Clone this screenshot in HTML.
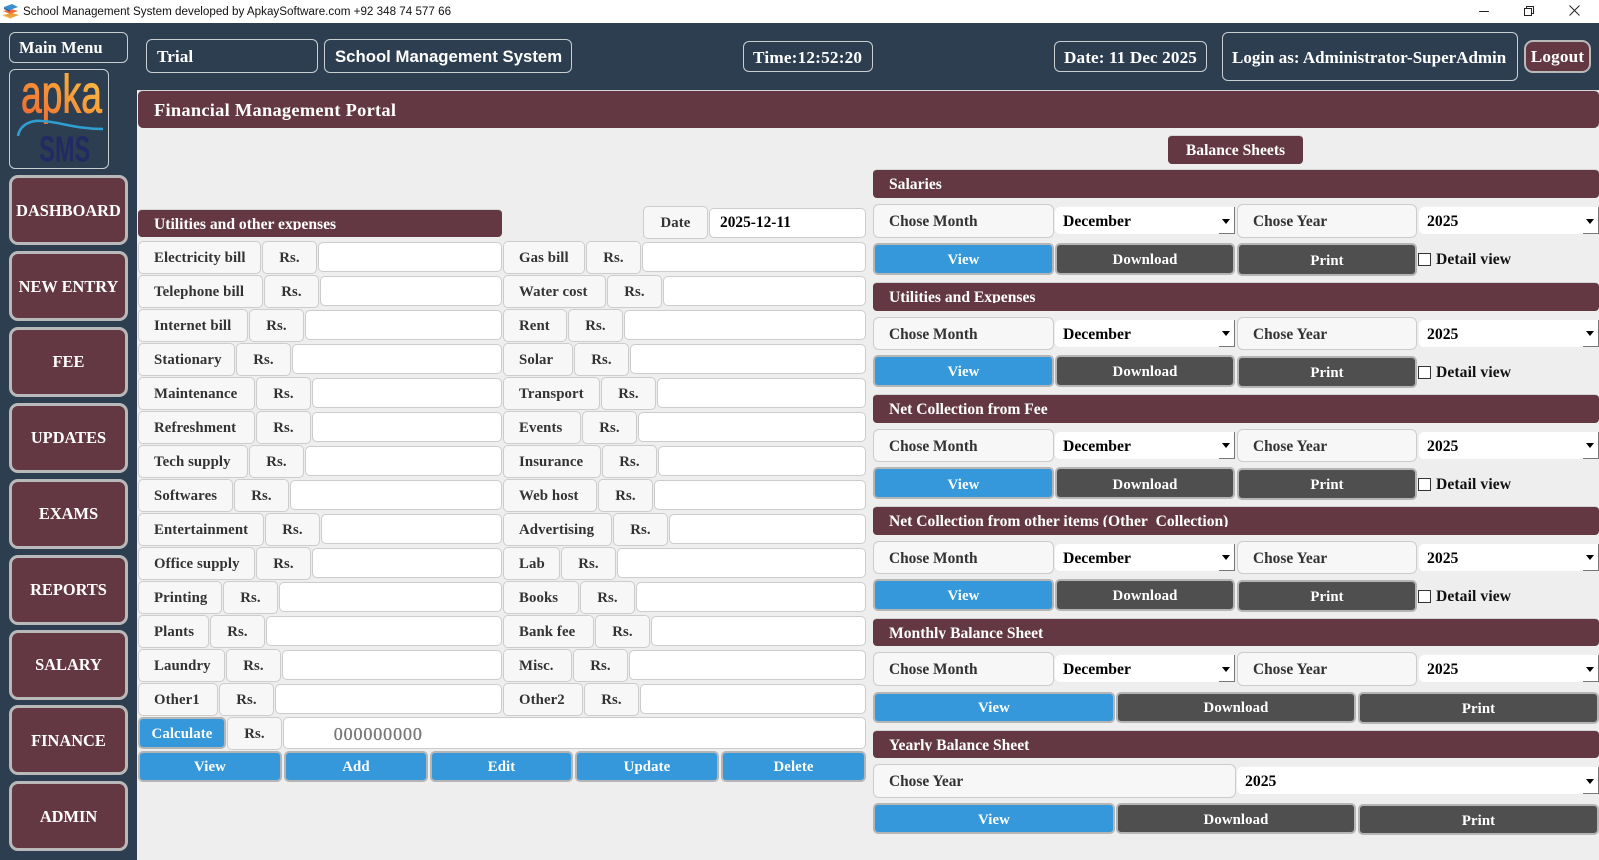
<!DOCTYPE html>
<html lang="en"><head><meta charset="utf-8"><title>School Management System</title>
<style>
*{box-sizing:border-box;margin:0;padding:0}
html,body{width:1599px;height:860px;overflow:hidden;background:#eee;font-family:"Liberation Serif",serif;font-weight:bold}
.a{position:absolute}
#tb{left:0;top:0;width:1599px;height:23px;background:#fff;font:11.65px/24px "Liberation Sans",sans-serif;color:#111}
#side{left:0;top:23px;width:137px;height:837px;background:#2c3e50}
#top{left:137px;top:23px;width:1462px;height:67px;background:#2c3e50}
#main{left:137px;top:90px;width:1462px;height:770px;background:#eee;border-top:1px solid #ddd}
.o{position:absolute;border:1px solid #c9ced3;border-radius:6px;color:#fff;display:flex;align-items:center;font-size:17.2px;letter-spacing:.15px;white-space:nowrap;padding-top:2px}
.n{position:absolute;left:9px;width:119px;height:70px;background:#643842;border:3px solid #b9b9b9;border-radius:9px;color:#fff;display:flex;align-items:center;justify-content:center;font-size:16.4px}
.h{position:absolute;background:#643842;border-top:1px solid #d5d5d5;border-radius:4px;color:#fff;padding-left:16px;font-size:15.6px}
.h span{display:block;height:20px;line-height:29px;overflow:hidden;white-space:pre}
.r{position:absolute;height:33px;display:flex}
.l{height:33px;background:#f7f7f7;border:1px solid #ccc;border-radius:5px;color:#333;padding-left:15px;line-height:33px;font-size:14.8px;white-space:nowrap;margin-right:1px;flex:none;letter-spacing:.1px}
.s{width:55px;padding:0;text-align:center}
.i{height:30px;margin-top:1px;background:#fff;border:1px solid #ccc;border-radius:5px;flex:1}
.b{position:absolute;border:2px solid #b5b5b5;border-radius:5px;color:#fff;display:flex;align-items:center;justify-content:center;font-size:14.8px;letter-spacing:.1px;background:#3498db;padding-top:2px}
.g .b{padding-top:3.5px}
.d{background:#4f4f4f}
.lb{position:absolute;height:33.4px;background:#f7f7f7;border:1px solid #ccc;border-radius:6px;color:#333;padding-left:15px;line-height:34px;font-size:15.4px}
.se{position:absolute;height:27px;background:#fff;border-radius:5px 0 0 5px;color:#000;padding-left:8px;line-height:29px;font-size:15.7px}
.se i{position:absolute;right:0;top:0;width:16px;height:27px;border-right:1.5px solid #777;border-bottom:1.5px solid #777;border-radius:0}
.se i:before{content:"";position:absolute;left:3px;top:11.5px;border-left:4px solid transparent;border-right:4px solid transparent;border-top:5px solid #000}
.g{position:absolute;left:0;top:0}
.c{position:absolute;left:1418px;width:13px;height:13px;background:#fff;border:1.5px solid #333}
.dv{position:absolute;left:1436px;color:#111;font-size:15.6px;line-height:18px;letter-spacing:.1px;white-space:nowrap}
</style></head><body>

<div id="tb" class="a">
<svg class="a" style="left:2px;top:2px" width="18" height="18" viewBox="0 0 18 18"><path d="M1 13l9-2 7 2-8 3z" fill="#e9a23b"/><path d="M1 9l8-2 7 2-8 3z" fill="#f26a3c"/><path d="M2 5l8-3 6 3-8 3z" fill="#3a8fd0"/><path d="M2 5l6 3v2L2 7z" fill="#2c6aa5"/><path d="M1 13l8 3v1l-8-3z" fill="#f6c864"/></svg>
<span class="a" style="left:23px;top:0;white-space:nowrap">School Management System developed by ApkaySoftware.com +92 348 74 577 66</span>
<svg class="a" style="left:1475px;top:3px" width="120" height="16" viewBox="0 0 120 16" fill="none" stroke="#222" stroke-width="1"><path d="M4 8.5h10"/><path d="M49.500 5.500h7v7h-7zM51.500 5.500v-2h7v7h-2"/><path d="M94.500 2.500l10 10M104.500 2.500l-10 10"/></svg>
</div>

<div id="side" class="a"></div>
<div id="top" class="a"></div>
<div id="main" class="a"></div>

<div class="o" style="left:9px;top:32px;width:119px;height:31px;padding:0 0 0 9px;font-size:16.4px">Main Menu</div>
<div class="o" style="left:9px;top:69px;width:100px;height:100px;padding:0">
<svg width="98" height="98" viewBox="0 0 98 98" style="display:block"><defs><linearGradient id="og" x1="0" y1="1" x2="1" y2="0"><stop offset="0" stop-color="#ee5f2e"/><stop offset=".6" stop-color="#f7a23b"/><stop offset="1" stop-color="#f9c64a"/></linearGradient></defs>
<text x="11" y="42.700" font-family="Liberation Sans,sans-serif" font-size="54" font-weight="normal" fill="url(#og)" textLength="81" lengthAdjust="spacingAndGlyphs" stroke="url(#og)" stroke-width="1">apka</text>
<path d="M8 66C10 54 22 50 32 51C50 52 66 59 93 59" fill="none" stroke="#2f9ed0" stroke-width="2.600"/>
<text x="29.300" y="91.700" font-family="Liberation Sans,sans-serif" font-size="36" font-weight="bold" fill="#232a63" textLength="51" lengthAdjust="spacingAndGlyphs">SMS</text></svg></div>

<div class="n" style="top:175px;padding-top:1.5px">DASHBOARD</div>
<div class="n" style="top:251px;padding-top:1.5px">NEW ENTRY</div>
<div class="n" style="top:327px">FEE</div>
<div class="n" style="top:402.500px">UPDATES</div>
<div class="n" style="top:478.500px">EXAMS</div>
<div class="n" style="top:554.500px">REPORTS</div>
<div class="n" style="top:630px">SALARY</div>
<div class="n" style="top:705px;padding-top:1.5px">FINANCE</div>
<div class="n" style="top:781px;padding-top:1.5px">ADMIN</div>

<div class="o" style="left:146px;top:39px;width:172px;height:34px;padding-left:10px;letter-spacing:.05px">Trial</div>
<div class="o" style="left:324px;top:39px;width:248px;height:34px;padding-left:10px;font:bold 16.75px 'Liberation Sans',sans-serif;letter-spacing:0">School Management System</div>
<div class="o" style="left:743px;top:41px;width:130px;height:31px;padding-left:9px;letter-spacing:.2px">Time:12:52:20</div>
<div class="o" style="left:1054px;top:41px;width:153px;height:31px;padding-left:9px;letter-spacing:.1px">Date: 11 Dec 2025</div>
<div class="o" style="left:1222px;top:32px;width:296px;height:49px;padding-left:9px;font-size:17px;letter-spacing:0">Login as: Administrator-SuperAdmin</div>
<div class="o" style="left:1524px;top:40px;width:67px;height:33px;background:#643842;border:2px solid #b9b9b9;border-radius:9px;justify-content:center;padding:0">Logout</div>

<div class="h" style="left:138px;top:90px;width:1461px;height:38px;line-height:38px;font-size:18.4px;border-radius:5px;letter-spacing:.27px">Financial Management Portal</div>
<div class="h" style="left:1168px;top:135px;width:135px;height:29px;padding:0;text-align:center;line-height:30px;font-size:15.6px">Balance Sheets</div>

<div class="h" style="left:138px;top:208.500px;width:364px;height:28.500px"><span>Utilities and other expenses</span></div>
<div class="l" style="position:absolute;left:643px;top:206px;width:65px;text-align:center;padding:0">Date</div>
<div class="i" style="position:absolute;left:709px;top:207px;width:157px;color:#000;padding-left:10px;font-size:15.400px;line-height:28px">2025-12-11</div>

<div class="r" style="left:138px;top:240.700px;width:364px"><div class="l" style="width:123px">Electricity bill</div><div class="l s">Rs.</div><div class="i"></div></div>
<div class="r" style="left:138px;top:274.700px;width:364px"><div class="l" style="width:125px">Telephone bill</div><div class="l s">Rs.</div><div class="i"></div></div>
<div class="r" style="left:138px;top:308.700px;width:364px"><div class="l" style="width:110px">Internet bill</div><div class="l s">Rs.</div><div class="i"></div></div>
<div class="r" style="left:138px;top:342.700px;width:364px"><div class="l" style="width:97px">Stationary</div><div class="l s">Rs.</div><div class="i"></div></div>
<div class="r" style="left:138px;top:376.700px;width:364px"><div class="l" style="width:117px">Maintenance</div><div class="l s">Rs.</div><div class="i"></div></div>
<div class="r" style="left:138px;top:410.700px;width:364px"><div class="l" style="width:117px">Refreshment</div><div class="l s">Rs.</div><div class="i"></div></div>
<div class="r" style="left:138px;top:444.700px;width:364px"><div class="l" style="width:110px">Tech supply</div><div class="l s">Rs.</div><div class="i"></div></div>
<div class="r" style="left:138px;top:478.700px;width:364px"><div class="l" style="width:95px">Softwares</div><div class="l s">Rs.</div><div class="i"></div></div>
<div class="r" style="left:138px;top:512.700px;width:364px"><div class="l" style="width:126px">Entertainment</div><div class="l s">Rs.</div><div class="i"></div></div>
<div class="r" style="left:138px;top:546.700px;width:364px"><div class="l" style="width:117px">Office supply</div><div class="l s">Rs.</div><div class="i"></div></div>
<div class="r" style="left:138px;top:580.700px;width:364px"><div class="l" style="width:84px">Printing</div><div class="l s">Rs.</div><div class="i"></div></div>
<div class="r" style="left:138px;top:614.700px;width:364px"><div class="l" style="width:71px">Plants</div><div class="l s">Rs.</div><div class="i"></div></div>
<div class="r" style="left:138px;top:648.700px;width:364px"><div class="l" style="width:87px">Laundry</div><div class="l s">Rs.</div><div class="i"></div></div>
<div class="r" style="left:138px;top:682.700px;width:364px"><div class="l" style="width:80px">Other1</div><div class="l s">Rs.</div><div class="i"></div></div>

<div class="r" style="left:503px;top:240.700px;width:363px"><div class="l" style="width:82px">Gas bill</div><div class="l s">Rs.</div><div class="i"></div></div>
<div class="r" style="left:503px;top:274.700px;width:363px"><div class="l" style="width:103px">Water cost</div><div class="l s">Rs.</div><div class="i"></div></div>
<div class="r" style="left:503px;top:308.700px;width:363px"><div class="l" style="width:64px">Rent</div><div class="l s">Rs.</div><div class="i"></div></div>
<div class="r" style="left:503px;top:342.700px;width:363px"><div class="l" style="width:70px">Solar</div><div class="l s">Rs.</div><div class="i"></div></div>
<div class="r" style="left:503px;top:376.700px;width:363px"><div class="l" style="width:97px">Transport</div><div class="l s">Rs.</div><div class="i"></div></div>
<div class="r" style="left:503px;top:410.700px;width:363px"><div class="l" style="width:78px">Events</div><div class="l s">Rs.</div><div class="i"></div></div>
<div class="r" style="left:503px;top:444.700px;width:363px"><div class="l" style="width:98px">Insurance</div><div class="l s">Rs.</div><div class="i"></div></div>
<div class="r" style="left:503px;top:478.700px;width:363px"><div class="l" style="width:94px">Web host</div><div class="l s">Rs.</div><div class="i"></div></div>
<div class="r" style="left:503px;top:512.700px;width:363px"><div class="l" style="width:109px">Advertising</div><div class="l s">Rs.</div><div class="i"></div></div>
<div class="r" style="left:503px;top:546.700px;width:363px"><div class="l" style="width:57px">Lab</div><div class="l s">Rs.</div><div class="i"></div></div>
<div class="r" style="left:503px;top:580.700px;width:363px"><div class="l" style="width:76px">Books</div><div class="l s">Rs.</div><div class="i"></div></div>
<div class="r" style="left:503px;top:614.700px;width:363px"><div class="l" style="width:91px">Bank fee</div><div class="l s">Rs.</div><div class="i"></div></div>
<div class="r" style="left:503px;top:648.700px;width:363px"><div class="l" style="width:69px">Misc.</div><div class="l s">Rs.</div><div class="i"></div></div>
<div class="r" style="left:503px;top:682.700px;width:363px"><div class="l" style="width:80px">Other2</div><div class="l s">Rs.</div><div class="i"></div></div>

<div class="b" style="left:138px;top:717px;width:88px;height:32px">Calculate</div>
<div class="l s" style="position:absolute;left:227px;top:716.700px">Rs.</div>
<div class="i" style="position:absolute;left:282.700px;top:716.700px;width:583px;height:32px;margin:0;padding-left:50px;color:#777;font-size:18px;line-height:32px;letter-spacing:.9px;font-weight:normal;-webkit-text-stroke:.3px #777">000000000</div>
<div class="b" style="left:138px;top:750.700px;width:144px;height:31px">View</div>
<div class="b" style="left:284px;top:750.700px;width:144px;height:31px">Add</div>
<div class="b" style="left:430px;top:750.700px;width:143px;height:31px">Edit</div>
<div class="b" style="left:575px;top:750.700px;width:144px;height:31px">Update</div>
<div class="b" style="left:721px;top:750.700px;width:145px;height:31px">Delete</div>

<!-- Salaries -->
<div class="g" style="top:169.300px"><div class="h" style="left:873px;top:0;width:726px;height:29px"><span>Salaries</span></div>
<div class="lb" style="left:873px;top:35px;width:181px">Chose Month</div><div class="se" style="left:1055px;top:38px;width:180px">December<i></i></div>
<div class="lb" style="left:1237px;top:35px;width:180px">Chose Year</div><div class="se" style="left:1419px;top:38px;width:180px">2025<i></i></div>
<div class="b" style="left:873px;top:73.700px;width:181px;height:32px">View</div><div class="b d" style="left:1055px;top:73.700px;width:180px;height:32px">Download</div><div class="b d" style="left:1237px;top:74px;width:180px;height:32.500px">Print</div>
<div class="c" style="top:84px"></div><div class="dv" style="top:82px">Detail view</div></div>

<div class="g" style="top:281.500px"><div class="h" style="left:873px;top:0;width:726px;height:29px"><span>Utilities and Expenses</span></div>
<div class="lb" style="left:873px;top:35px;width:181px">Chose Month</div><div class="se" style="left:1055px;top:38px;width:180px">December<i></i></div>
<div class="lb" style="left:1237px;top:35px;width:180px">Chose Year</div><div class="se" style="left:1419px;top:38px;width:180px">2025<i></i></div>
<div class="b" style="left:873px;top:73.700px;width:181px;height:32px">View</div><div class="b d" style="left:1055px;top:73.700px;width:180px;height:32px">Download</div><div class="b d" style="left:1237px;top:74px;width:180px;height:32.500px">Print</div>
<div class="c" style="top:84px"></div><div class="dv" style="top:82px">Detail view</div></div>

<div class="g" style="top:393.700px"><div class="h" style="left:873px;top:0;width:726px;height:29px"><span>Net Collection from Fee</span></div>
<div class="lb" style="left:873px;top:35px;width:181px">Chose Month</div><div class="se" style="left:1055px;top:38px;width:180px">December<i></i></div>
<div class="lb" style="left:1237px;top:35px;width:180px">Chose Year</div><div class="se" style="left:1419px;top:38px;width:180px">2025<i></i></div>
<div class="b" style="left:873px;top:73.700px;width:181px;height:32px">View</div><div class="b d" style="left:1055px;top:73.700px;width:180px;height:32px">Download</div><div class="b d" style="left:1237px;top:74px;width:180px;height:32.500px">Print</div>
<div class="c" style="top:84px"></div><div class="dv" style="top:82px">Detail view</div></div>

<div class="g" style="top:505.500px"><div class="h" style="left:873px;top:0;width:726px;height:29px"><span>Net Collection from other items (Other&nbsp; Collection)</span></div>
<div class="lb" style="left:873px;top:35px;width:181px">Chose Month</div><div class="se" style="left:1055px;top:38px;width:180px">December<i></i></div>
<div class="lb" style="left:1237px;top:35px;width:180px">Chose Year</div><div class="se" style="left:1419px;top:38px;width:180px">2025<i></i></div>
<div class="b" style="left:873px;top:73.700px;width:181px;height:32px">View</div><div class="b d" style="left:1055px;top:73.700px;width:180px;height:32px">Download</div><div class="b d" style="left:1237px;top:74px;width:180px;height:32.500px">Print</div>
<div class="c" style="top:84px"></div><div class="dv" style="top:82px">Detail view</div></div>

<div class="g" style="top:618px"><div class="h" style="left:873px;top:0;width:726px;height:28px"><span>Monthly Balance Sheet</span></div>
<div class="lb" style="left:873px;top:34.300px;width:181px">Chose Month</div><div class="se" style="left:1055px;top:37.300px;width:180px">December<i></i></div>
<div class="lb" style="left:1237px;top:34.300px;width:180px">Chose Year</div><div class="se" style="left:1419px;top:37.300px;width:180px">2025<i></i></div>
<div class="b" style="left:873px;top:73.700px;width:242px;height:31px">View</div><div class="b d" style="left:1116px;top:73.700px;width:240px;height:31px">Download</div><div class="b d" style="left:1358px;top:74px;width:241px;height:31.500px">Print</div></div>

<div class="g" style="top:730px"><div class="h" style="left:873px;top:0;width:726px;height:28.300px"><span>Yearly Balance Sheet</span></div>
<div class="lb" style="left:873px;top:34.300px;width:363px">Chose Year</div><div class="se" style="left:1237px;top:37.300px;width:362px">2025<i></i></div>
<div class="b" style="left:873px;top:73.300px;width:242px;height:31px">View</div><div class="b d" style="left:1116px;top:73.300px;width:240px;height:31px">Download</div><div class="b d" style="left:1358px;top:73.600px;width:241px;height:31.500px">Print</div></div>

</body></html>
